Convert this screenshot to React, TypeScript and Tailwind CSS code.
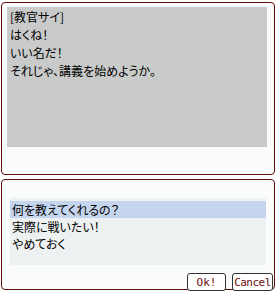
const lines = ["[教官サイ]", "はくね！", "いい名だ！", "それじゃ、講義を始めようか。"];
const choices = ["何を教えてくれるの？", "実際に戦いたい！", "やめておく"];

const jp = "font-['Noto_Sans_CJK_JP','Noto_Sans',sans-serif] [font-feature-settings:'palt']";

export default function App() {
  return (
    <div className="w-[276px] h-[291px] bg-white flex flex-col overflow-hidden">
      {/* message window */}
      <div className="ml-[1px] mt-[2px] w-[274px] h-[173px] border border-[#5e0c0c] rounded-[4px] bg-[#fafcfc] pl-[5px] pt-[4px]">
        <div className={`w-[260px] h-[140px] bg-[#c9cbca] pl-[3px] pt-[1px] text-[12px] leading-[18px] text-black ${jp}`}>
          {lines.map((l, i) => (
            <div key={i}>{l}</div>
          ))}
        </div>
      </div>

      {/* choice window */}
      <div className="ml-[1px] mt-[4px] w-[274px] h-[111px] border border-[#5e0c0c] rounded-[4px] bg-[#fafcfc] flex flex-col">
        <div className={`mt-[18px] ml-[8px] w-[256px] h-[67px] bg-[#eef1f1] pt-[3px] text-[12px] leading-[17px] text-black ${jp}`}>
          {choices.map((c, i) => (
            <div key={i} className={`pl-[2px] ${i === 0 ? "bg-[#c6d5ee]" : ""}`}>
              {c}
            </div>
          ))}
        </div>
        <div className="flex justify-end gap-[6px] mt-auto mr-[1px] mb-[-2px]">
          <button className="w-[39px] h-[18px] border border-[#333] rounded-[3px] bg-white text-[11px] leading-none text-[#6a0d0d] font-['DejaVu_Sans_Mono',monospace]">
            Ok!
          </button>
          <button className="w-[41px] h-[18px] border border-[#333] rounded-[3px] bg-white text-[11px] leading-none text-[#6a0d0d] font-['DejaVu_Sans_Mono',monospace] tracking-[-0.5px]">
            Cancel
          </button>
        </div>
      </div>
    </div>
  );
}
